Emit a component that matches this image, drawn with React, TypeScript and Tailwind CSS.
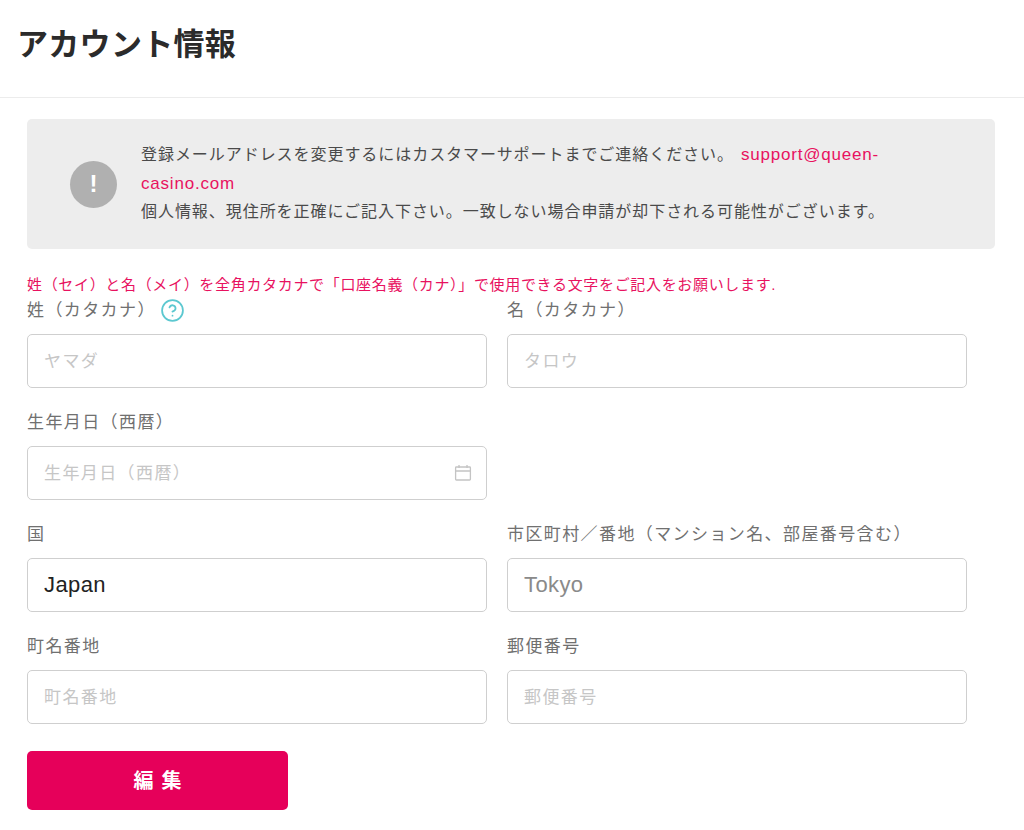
import { CircleHelp } from "lucide-react";

const fontStack = "font-['Liberation_Sans','Noto_Sans_CJK_JP',sans-serif]";

function CalendarIcon() {
  return (
    <svg width="18" height="18" viewBox="0 0 18 18" fill="none" stroke="#c4c4c4" strokeWidth="1.3" className="absolute right-[15px] top-[18px]">
      <rect x="1.6" y="3" width="14.8" height="13" rx="0.8" />
      <path d="M1.6 7h14.8M5 1v3M13 1v3" />
    </svg>
  );
}

type FieldProps = {
  label: string;
  placeholder?: string;
  value?: string;
  large?: boolean;
  help?: boolean;
  calendar?: boolean;
};

function Field({ label, placeholder, value, large, help, calendar }: FieldProps) {
  return (
    <div className="w-[460px]">
      <label className="flex h-[24px] items-center pt-[2px] text-[17px] leading-[24px] tracking-[1.4px] text-[#707070]">
        {label}
        {help && <CircleHelp className="-mt-[2px] ml-[4px] text-[#5cc8d0]" size={25} strokeWidth={1.7} />}
      </label>
      <div className="relative mt-[12px]">
        <input
          readOnly
          value={value}
          placeholder={placeholder}
          className={`block h-[54px] w-full rounded-[5px] border border-[#cfcfcf] bg-white px-[16px] text-[#222] outline-none ${large ? "text-[22px] tracking-[0.4px] placeholder:text-[#8a8a8a]" : "pt-[1px] text-[17px] tracking-[1.4px] placeholder:text-[#c6c6c6]"}`}
        />
        {calendar && <CalendarIcon />}
      </div>
    </div>
  );
}

export default function App() {
  return (
    <main className={`min-h-[830px] bg-white ${fontStack}`}>
      <header className="flex h-[98px] items-center border-b border-[#ececec] pb-[8px] pl-[17px]">
        <h1 className="text-[31px] font-bold leading-none tracking-[0.3px] text-[#2b2b2b]">アカウント情報</h1>
      </header>

      <div className="pl-[27px]">
        <section className="mt-[21px] flex h-[130px] w-[968px] items-center rounded-[5px] bg-[#ededed]">
          <div className="ml-[43px] flex h-[47px] w-[47px] items-center justify-center rounded-full bg-[#b0b0b0] text-[24px] font-bold text-white">
            !
          </div>
          <p className="ml-[24px] w-[790px] text-[16px] leading-[28.5px] tracking-[0.95px] text-[#4a4a4a]">
            登録メールアドレスを変更するにはカスタマーサポートまでご連絡ください。
            <a className="ml-[7px] text-[17px] tracking-[0.8px] text-[#e8125f]">support@queen-casino.com</a>
            <br />
            個人情報、現住所を正確にご記入下さい。一致しない場合申請が却下される可能性がございます。
          </p>
        </section>

        <p className="mt-[25px] h-[24px] text-[15px] leading-[22px] tracking-[0.67px] text-[#e8125f]">
          姓（セイ）と名（メイ）を全角カタカナで「口座名義（カナ）」で使用できる文字をご記入をお願いします.
        </p>

        <form className="grid w-[940px] grid-cols-[460px_460px] gap-x-[20px] gap-y-[22px]">
          <Field label="姓（カタカナ）" placeholder="ヤマダ" help />
          <Field label="名（カタカナ）" placeholder="タロウ" />
          <Field label="生年月日（西暦）" placeholder="生年月日（西暦）" calendar />
          <div />
          <Field label="国" value="Japan" large />
          <Field label="市区町村／番地（マンション名、部屋番号含む）" placeholder="Tokyo" large />
          <Field label="町名番地" placeholder="町名番地" />
          <Field label="郵便番号" placeholder="郵便番号" />
        </form>

        <button className="mt-[27px] h-[59px] w-[261px] rounded-[5px] bg-[#e6005a] pl-[8px] text-[20px] font-bold tracking-[8px] text-white">
          編集
        </button>
      </div>
    </main>
  );
}
